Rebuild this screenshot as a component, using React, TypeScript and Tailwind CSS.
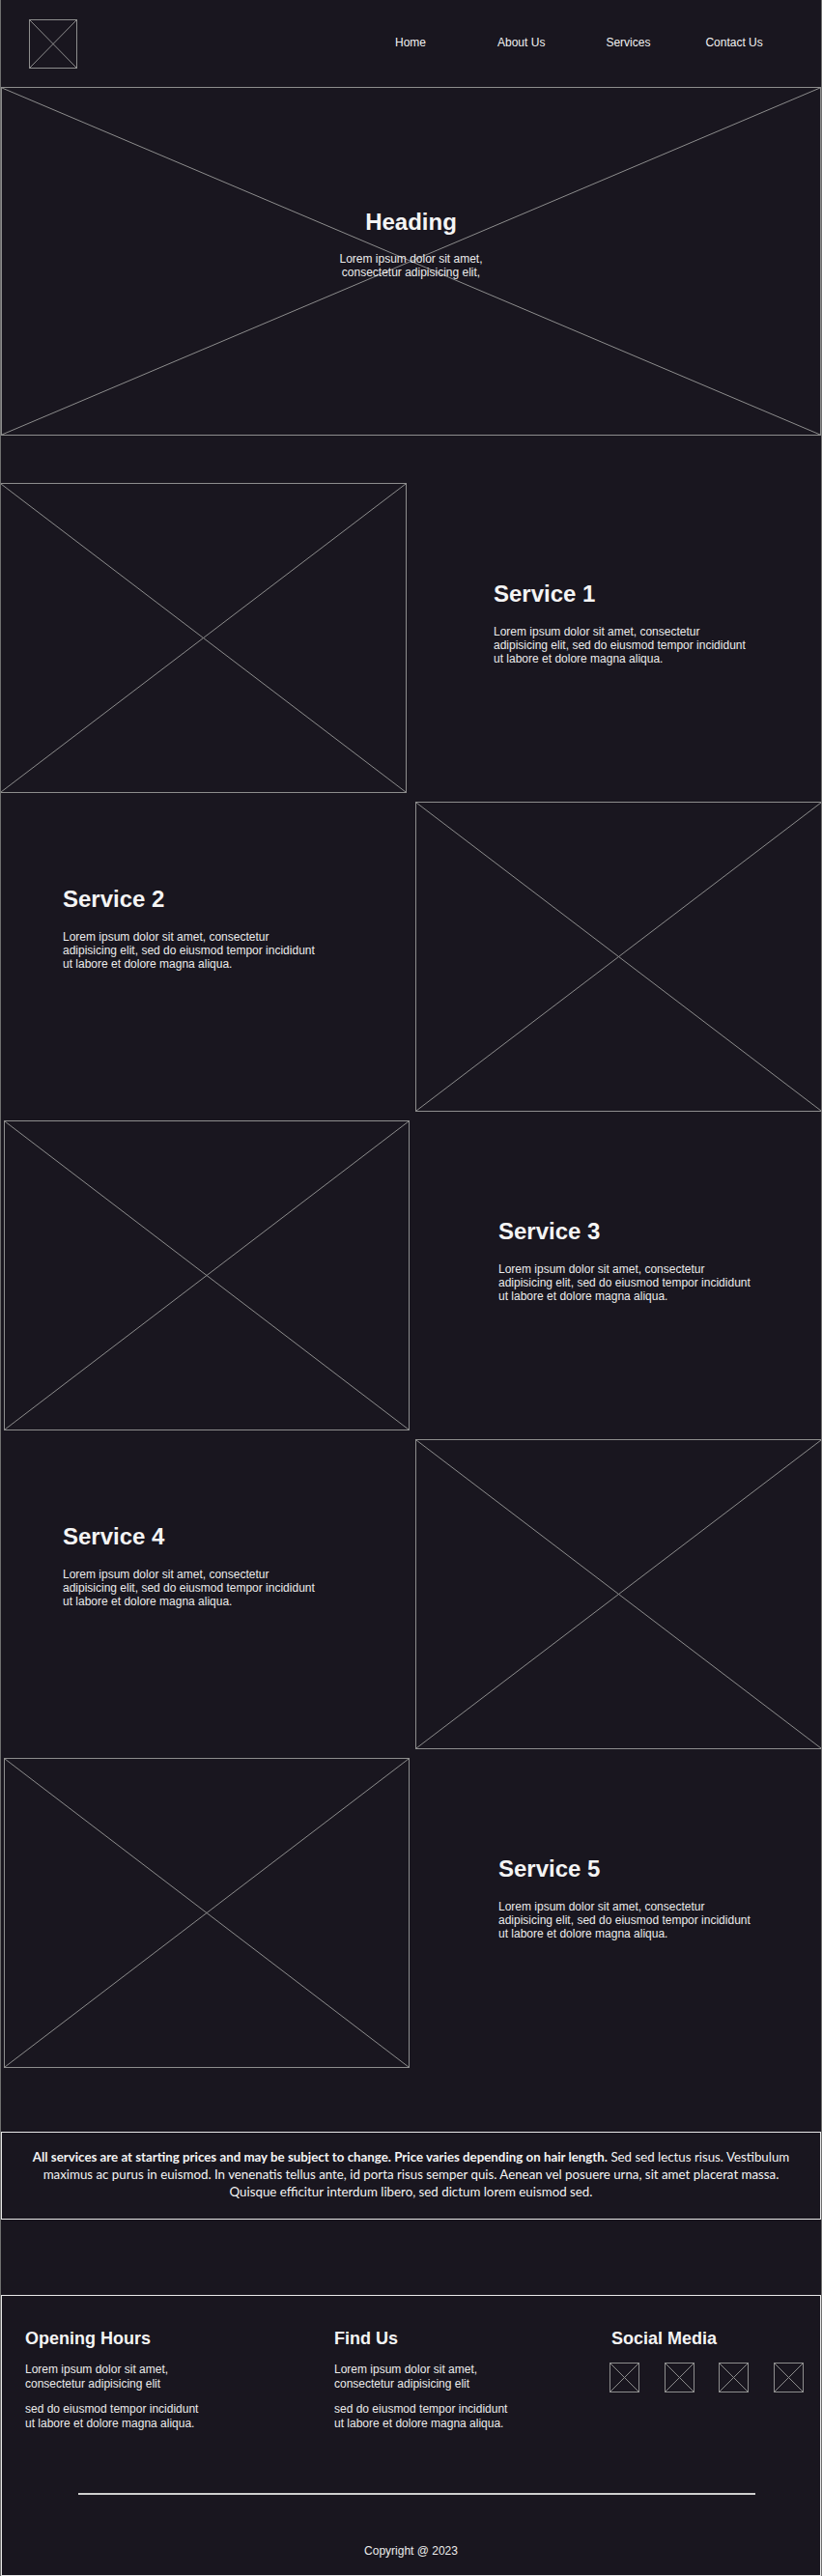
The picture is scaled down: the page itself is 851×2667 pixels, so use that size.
import React from "react";

function XBox({ className = "" }: { className?: string }) {
  return (
    <div className={`relative border border-[#8d8d8d] ${className}`}>
      <svg
        className="absolute inset-0 h-full w-full"
        viewBox="0 0 100 100"
        preserveAspectRatio="none"
      >
        <line x1="0" y1="0" x2="100" y2="100" stroke="#8d8d8d" strokeWidth="1" vectorEffect="non-scaling-stroke" />
        <line x1="100" y1="0" x2="0" y2="100" stroke="#8d8d8d" strokeWidth="1" vectorEffect="non-scaling-stroke" />
      </svg>
    </div>
  );
}

const LOREM = "Lorem ipsum dolor sit amet, consectetur adipisicing elit, sed do eiusmod tempor incididunt ut labore et dolore magna aliqua.";

function ServiceText({ n, className }: { n: number; className: string }) {
  return (
    <div className={className}>
      <h2 className="text-[24px] font-bold leading-[27.6px] text-[#f4f4f4] mb-[18px]">Service {n}</h2>
      <p className="w-[266px] text-[12px] leading-[14.3px] text-[#ececec]">{LOREM}</p>
    </div>
  );
}

export default function App() {
  return (
    <div
      className="w-[851px] h-[2667px] overflow-hidden bg-[#19161f] text-white border-x border-[#6f6f6f]"
      style={{ fontFamily: '"Liberation Sans", Arial, sans-serif' }}
    >
      {/* Header */}
      <header className="flex h-[90px] items-start">
        <XBox className="ml-[29px] mt-[20px] h-[51px] w-[50px]" />
        <nav className="mt-[37px] flex text-[12px] leading-[14px] text-[#f2f2f2]">
          <a className="ml-[329px]">Home</a>
          <a className="ml-[74px]">About Us</a>
          <a className="ml-[63px]">Services</a>
          <a className="ml-[57px]">Contact Us</a>
        </nav>
      </header>

      {/* Hero */}
      <section className="relative h-[361px] w-full border border-[#8d8d8d]">
        <svg className="absolute inset-0 h-full w-full" viewBox="0 0 100 100" preserveAspectRatio="none">
          <line x1="0" y1="0" x2="100" y2="100" stroke="#8d8d8d" strokeWidth="1" vectorEffect="non-scaling-stroke" />
          <line x1="100" y1="0" x2="0" y2="100" stroke="#8d8d8d" strokeWidth="1" vectorEffect="non-scaling-stroke" />
        </svg>
        <div className="relative flex flex-col items-center pt-[125px] text-center">
          <h1 className="text-[24px] font-bold leading-[27.6px] text-[#f4f4f4] mb-[17px]">Heading</h1>
          <p className="text-[12px] leading-[14px] text-[#ececec]">
            Lorem ipsum dolor sit amet,
            <br />
            consectetur adipisicing elit,
          </p>
        </div>
      </section>

      {/* Services */}
      <div className="mt-[49px] flex flex-col">
        <div className="flex h-[330px] items-start">
          <XBox className="h-[321px] w-[421px] shrink-0 -ml-px" />
          <ServiceText n={1} className="ml-[90px] pt-[101px]" />
        </div>
        <div className="flex h-[330px] items-start">
          <ServiceText n={2} className="w-[429px] shrink-0 pl-[64px] pt-[87px]" />
          <XBox className="h-[321px] w-[421px] shrink-0" />
        </div>
        <div className="flex h-[330px] items-start">
          <XBox className="ml-[3px] h-[321px] w-[420px] shrink-0" />
          <ServiceText n={3} className="ml-[92px] pt-[101px]" />
        </div>
        <div className="flex h-[330px] items-start">
          <ServiceText n={4} className="w-[429px] shrink-0 pl-[64px] pt-[87px]" />
          <XBox className="h-[321px] w-[421px] shrink-0" />
        </div>
        <div className="flex h-[330px] items-start">
          <XBox className="ml-[3px] h-[321px] w-[420px] shrink-0" />
          <ServiceText n={5} className="ml-[92px] pt-[101px]" />
        </div>
      </div>

      {/* Notice */}
      <section
        className="mt-[57px] h-[91px] w-full border border-[#e8e8e8] px-[24px] pt-[16px] text-center text-[13.3px] leading-[18px] text-[#f4f4f4]"
        style={{ fontFamily: 'Lato, "Open Sans", sans-serif' }}
      >
        <p>
          <b className="font-bold">All services are at starting prices and may be subject to change. Price varies depending on hair length.</b>
          {" Sed sed lectus risus. Vestibulum maximus ac purus in euismod. In venenatis tellus ante, id porta risus semper quis. Aenean vel posuere urna, sit amet placerat massa. Quisque efficitur interdum libero, sed dictum lorem euismod sed."}
        </p>
      </section>

      {/* Footer */}
      <footer className="mt-[78px] flex h-[291px] w-full flex-col border border-[#e8e8e8]">
        <div className="flex h-[204px] pt-[34px]">
          <div className="ml-[24px] w-[320px] shrink-0">
            <h3 className="text-[18px] font-bold leading-[20.7px] text-[#f4f4f4]">Opening Hours</h3>
            <p className="mt-[14px] text-[12px] leading-[15px] text-[#ececec]">
              Lorem ipsum dolor sit amet,
              <br />
              consectetur adipisicing elit
            </p>
            <p className="mt-[11px] text-[12px] leading-[15px] text-[#ececec]">
              sed do eiusmod tempor incididunt
              <br />
              ut labore et dolore magna aliqua.
            </p>
          </div>
          <div className="w-[285px] shrink-0">
            <h3 className="text-[18px] font-bold leading-[20.7px] text-[#f4f4f4]">Find Us</h3>
            <p className="mt-[14px] text-[12px] leading-[15px] text-[#ececec]">
              Lorem ipsum dolor sit amet,
              <br />
              consectetur adipisicing elit
            </p>
            <p className="mt-[11px] text-[12px] leading-[15px] text-[#ececec]">
              sed do eiusmod tempor incididunt
              <br />
              ut labore et dolore magna aliqua.
            </p>
          </div>
          <div className="shrink-0">
            <h3 className="ml-[2px] text-[18px] font-bold leading-[20.7px] text-[#f4f4f4]">Social Media</h3>
            <div className="mt-[14px] flex w-[201px] justify-between">
              <XBox className="h-[31px] w-[31px]" />
              <XBox className="h-[31px] w-[31px]" />
              <XBox className="h-[31px] w-[31px]" />
              <XBox className="h-[31px] w-[31px]" />
            </div>
          </div>
        </div>
        <div className="ml-[79px] h-[2px] w-[701px] bg-[#cfcfcf]" />
        <p className="mt-[51px] text-center text-[12px] leading-[14px] text-[#ececec]">Copyright @ 2023</p>
      </footer>
    </div>
  );
}
